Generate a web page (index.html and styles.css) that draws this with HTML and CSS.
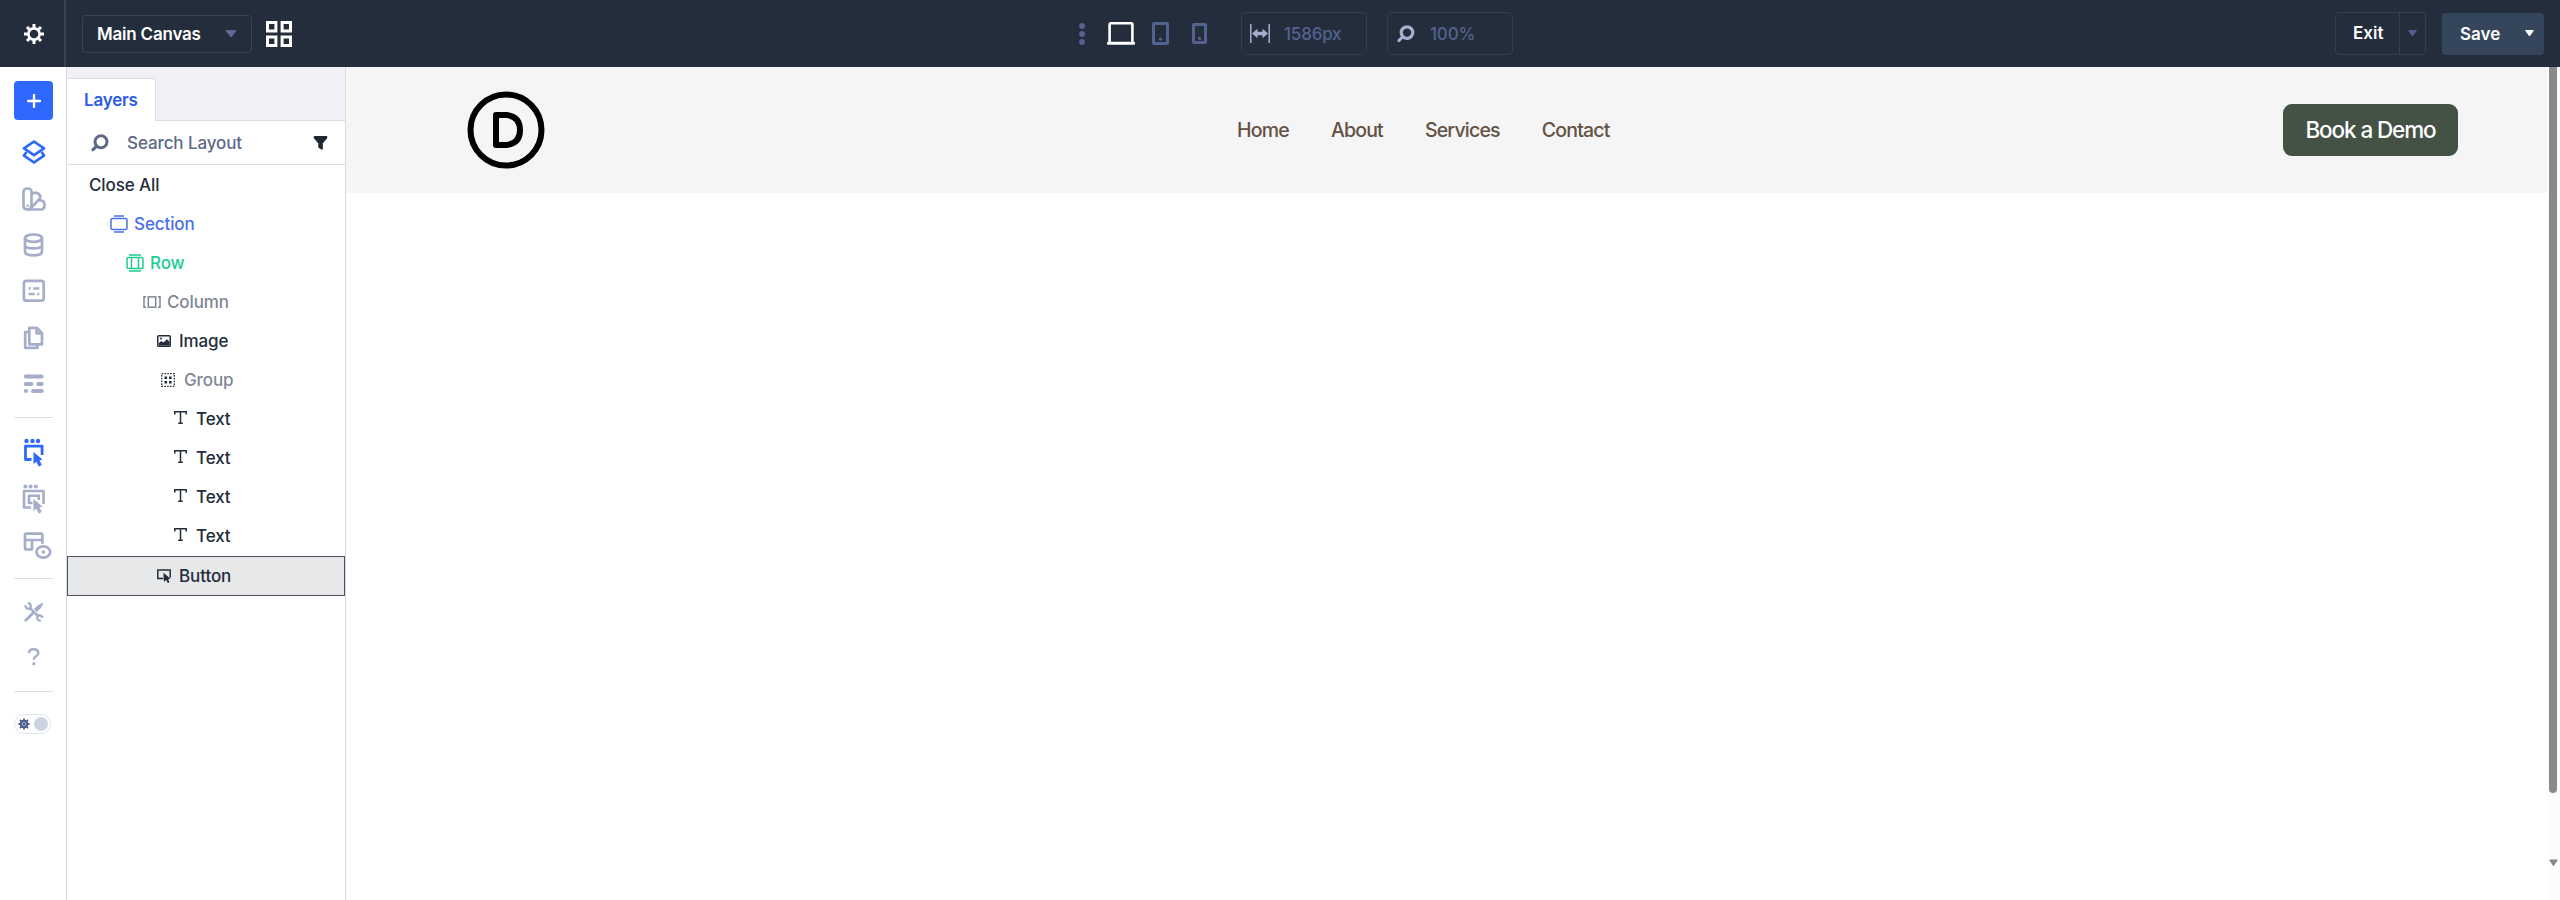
FILE: index.html
```
<!DOCTYPE html>
<html lang="en">
  <head>
    <meta charset="UTF-8" />
    <meta name="viewport" content="width=device-width, initial-scale=1.0" />
    <title>Main Canvas</title>
    <link rel="stylesheet" href="styles.css">
  </head>
  <body>
    <header class="topbar">
      <div class="settings">
        <svg width="20" height="20" viewBox="0 0 20 20"><circle cx="10" cy="10" r="5.6" fill="none" stroke="#fff" stroke-width="2.6" /><path d="M10 0v4M10 16v4M0 10h4M16 10h4M3 3l2.6 2.6M14.4 14.4L17 17M3 17l2.6-2.6M14.4 5.6L17 3" stroke="#fff" stroke-width="3" /></svg>
      </div>
      <div class="canvas-select">
        <span>Main Canvas</span>
        <svg width="12" height="8" viewBox="0 0 12 8"><path d="M1 .7h10L6 7z" fill="#5c6b9a" stroke="#5c6b9a" stroke-linejoin="round" /></svg>
      </div>
      <svg class="grid-icon" width="26" height="26" viewBox="0 0 26 26"><path d="M1.5 1.5h8.4v8.4H1.5zM16.1 1.5h8.4v8.4h-8.4zM1.5 16.1h8.4v8.4H1.5zM16.1 16.1h8.4v8.4h-8.4z" fill="none" stroke="#fff" stroke-width="3" /></svg>
      <div class="devices">
        <svg class="dots" width="6" height="22" viewBox="0 0 6 22"><circle cx="3" cy="3" r="2.9" /><circle cx="3" cy="11" r="2.9" /><circle cx="3" cy="19" r="2.9" /></svg>
        <svg class="laptop" width="28" height="23" viewBox="0 0 28 23"><path d="M2.6 20V2.5Q2.6 1.3 3.8 1.3h20.4q1.2 0 1.2 1.2V20" fill="none" stroke="#fff" stroke-width="2.6" /><rect y="19.8" width="28" height="3" rx="1" fill="#fff" /></svg>
        <svg class="tablet" width="17" height="23" viewBox="0 0 17 23"><rect x="1.5" y="1.5" width="14" height="20" rx=".5" fill="none" stroke="#53638f" stroke-width="3" /><circle cx="8.5" cy="17.2" r="1.6" fill="#53638f" /></svg>
        <svg class="phone" width="15" height="21" viewBox="0 0 15 21"><rect x="1.5" y="1.5" width="12" height="18" rx=".5" fill="none" stroke="#53638f" stroke-width="3" /><circle cx="7.5" cy="15.4" r="1.6" fill="#53638f" /></svg>
      </div>
      <div class="field field-width">
        <svg width="20" height="19" viewBox="0 0 20 19"><path d="M.8 0v19M19.2 0v19" stroke="#a5b0d0" stroke-width="1.5" /><path d="M2 9.5l5.5-4.7v3h5v-3L18 9.5l-5.5 4.7v-3h-5v3z" fill="#a5b0d0" /></svg>
        <span>1586px</span>
      </div>
      <div class="field field-zoom">
        <svg width="18" height="18" viewBox="0 0 18 18"><circle cx="10" cy="7.6" r="5.8" fill="none" stroke="#a5b0d0" stroke-width="3.2" /><path d="M5.4 12L2 15.5" stroke="#a5b0d0" stroke-width="3.2" stroke-linecap="round" /></svg>
        <span>100%</span>
      </div>
      <div class="exit">
        <span class="exit-label">Exit</span>
        <span class="exit-arrow"><svg width="9" height="7" viewBox="0 0 9 7"><path d="M.6.5h7.8L4.5 6z" fill="#535e90" stroke="#535e90" stroke-linejoin="round" /></svg></span>
      </div>
      <div class="save">
        <span>Save</span>
        <svg width="9" height="7" viewBox="0 0 9 7"><path d="M.6.5h7.8L4.5 6z" fill="#fff" stroke="#fff" stroke-linejoin="round" /></svg>
      </div>
    </header>

    <div class="workspace">
      <nav class="rail">
        <button class="add"><svg width="14" height="14" viewBox="0 0 14 14"><path d="M7 1v12M1 7h12" stroke="#fff" stroke-width="2.3" stroke-linecap="round" /></svg></button>
        <div class="rail-item active"><svg width="24" height="24" viewBox="0 0 24 24"><path d="M12 1.5L22 8.3 12 15.2 2 8.3z" /><path d="M4.5 12L2 15.6l10 6.9 10-6.9-2.5-3.6" /></svg></div>
        <div class="rail-item"><svg width="24" height="24" viewBox="0 0 24 24"><path d="M1.5 5.2Q1.5 1.5 5.5 1.5T9.5 5.2V18.7Q9.5 22.5 5.5 22.5T1.5 18.7z" /><path d="M9.5 7.5Q12 4.6 15.5 6.3T18 11.5L8.3 21.6" /><path d="M16.5 13.5h2.3q3.7 0 3.7 4.4T18.8 22.5H5.5" /><circle cx="5.6" cy="18.7" r=".7" stroke-width="1.2" /></svg></div>
        <div class="rail-item"><svg width="24" height="24" viewBox="0 0 24 24"><ellipse cx="11.5" cy="5.2" rx="8.5" ry="3.7" /><path d="M3 5.2v13.4c0 5 17 5 17 0V5.2M3 12c0 4.6 17 4.6 17 0" /></svg></div>
        <div class="rail-item"><svg width="24" height="24" viewBox="0 0 24 24"><rect x="1.9" y="1.9" width="19.8" height="19.8" rx="2.5" /><path d="M6.6 9.5h2M11.3 9.5h6M6.6 15h6M15.3 15h2" /></svg></div>
        <div class="rail-item"><svg width="24" height="24" viewBox="0 0 24 24"><path d="M7.3 1.8h7.7l5 5.4v11.1H7.3zM14.6 2v5.4H20" /><path d="M6.5 6H3.2v15.8h12.3v-3" /></svg></div>
        <div class="rail-item"><svg width="24" height="24" viewBox="0 0 24 24"><path d="M3.8 4.5h15.9M3.8 12h5.7M16.2 12h3.5M3.8 19h.2M11 19h8.7" stroke-width="4" stroke-linecap="round" /></svg></div>
        <hr>
        <div class="rail-item active"><svg width="24" height="30" viewBox="0 0 24 30"><g class="solid"><circle cx="4.5" cy="3" r="2.2" /><circle cx="10.5" cy="3" r="2.2" /><circle cx="16" cy="3" r="2.2" /><path d="M11.5 14l9 7.6-3 .8 2.3 4.6-3.1 1.6-2.3-4.8-2.9 2.3z" /></g><path d="M9.5 21.5h-6V8.1h16.6v9" stroke-width="2.8" /></svg></div>
        <div class="rail-item"><svg width="24" height="30" viewBox="0 0 24 30"><g class="solid"><circle cx="3.4" cy="2.5" r="2" /><circle cx="8.6" cy="2.5" r="2" /><circle cx="13.8" cy="2.5" r="2" /><path d="M11.5 15l9 7.6-3 .8 2.3 4.6-3.1 1.6-2.3-4.8-2.9 2.3z" /></g><path d="M9 23.5H2V7h19.5v13M10.500 19H7v-7.200h9.800V16" stroke-width="2.6" /></svg></div>
        <div class="rail-item layout-view"><svg width="30" height="27" viewBox="0 0 30 27"><path d="M11 17.5H4.400q-1.400 0-1.400-1.400V3q0-1.400 1.400-1.400h14.500q1.400 0 1.400 1.400v8.800M3 8h17.300M10 8v9" /><ellipse cx="21.3" cy="20" rx="6.900" ry="5.600" /><circle class="solid" cx="21.3" cy="20" r="1.8" /></svg></div>
        <hr>
        <div class="rail-item tools"><svg width="20" height="20" viewBox="0 0 20 20"><path d="M1.8 18.2L9.5 10.6" stroke-width="2.8" stroke-linecap="round" /><path d="M11.4 8.5L16 4" stroke-width="4" /><path class="solid" d="M14.2 3.4L18.3.8l1 1-2.6 4.1z" /><path d="M5.6 5.6l9 9" stroke-width="2.6" /><path d="M1.3 3.2Q1.5 6.8 4.8 6.9 7 6 6.8 3.8 6.5 1.2 3.8 1M18.8 15.8Q17.2 12.8 14.6 13.3 12.3 14.8 13.6 17.4 14.6 18.7 16.8 18.8" stroke-width="2.3" /></svg></div>
        <div class="rail-item help"><svg width="14" height="18" viewBox="0 0 14 18"><path d="M2 5.1Q2.2 1.3 6.7 1.3q4.6.1 4.6 3.6 0 1.9-2.2 3.3Q6.8 9.5 6.8 11.7" stroke-width="2.4" /><circle class="solid" cx="6.8" cy="15.7" r="1.6" /></svg></div>
        <hr>
        <div class="toggle">
          <svg width="12" height="12" viewBox="0 0 12 12"><circle cx="6" cy="6" r="4.2" fill="#4c5d8d" /><path d="M6 .5v11M.5 6h11M2 2l8 8M2 10l8-8" stroke="#4c5d8d" stroke-width="1.8" /><circle cx="6" cy="6" r="1.8" fill="#4c5d8d" stroke="#aab4ce" stroke-width="1" /></svg>
          <span class="knob"></span>
        </div>
      </nav>

      <aside class="panel">
        <div class="tabs"><div class="tab">Layers</div></div>
        <div class="search">
          <svg width="18" height="18" viewBox="0 0 18 18"><circle cx="10" cy="7.8" r="6" fill="none" stroke="#5d6987" stroke-width="3" /><path d="M5.4 12.4L2 15.7" stroke="#5d6987" stroke-width="3.2" stroke-linecap="round" /></svg>
          <span>Search Layout</span>
          <svg class="filter" width="15" height="16" viewBox="0 0 15 16"><path d="M1.2 1.5h12.6V3L9.3 8.5v5.8l-3.5-1.8v-4L1.2 3z" fill="#1e2733" stroke="#1e2733" stroke-linejoin="round" /></svg>
        </div>
        <ul class="tree">
          <li class="close-all">Close All</li>
          <li class="section"><svg width="18" height="18" viewBox="0 0 18 18"><rect x="1" y="3.5" width="16" height="11" rx="1.5" /><path d="M4 .9h10M4 17.1h10" /></svg>Section</li>
          <li class="row"><svg width="18" height="18" viewBox="0 0 18 18"><rect x="1" y="3.5" width="16" height="11" rx="1.5" /><path d="M3 .9h12M3 17.1h12M5.5 3.5v11M12.5 3.5v11" /></svg>Row</li>
          <li class="column"><svg width="18" height="12" viewBox="0 0 18 12"><rect x="5.3" y=".8" width="7.4" height="10.4" /><path d="M3 .8H1v10.4h2M15 .8h2v10.4h-2" /></svg>Column</li>
          <li class="image"><svg width="14" height="12" viewBox="0 0 14 12"><rect x=".8" y=".8" width="12.4" height="10.4" rx=".8" /><path class="fill" d="M2 10.5V8l2.4-2 2 1.6L10 4.2l2.5 2.6v3.7z" /><circle class="fill" cx="4" cy="3.6" r="1" /></svg>Image</li>
          <li class="group"><svg width="14" height="14" viewBox="0 0 14 14"><rect x=".7" y=".7" width="12.6" height="12.6" stroke-dasharray="1.6 1.2" stroke-width="1.3" /><path class="fill" d="M3.5 3.5h2.6v2.6H3.5zM8 3.5h2.6v2.6H8zM3.5 8h2.6v2.6H3.5zM8 8h2.6v2.6H8z" /></svg>Group</li>
          <li class="text"><svg width="13" height="13" viewBox="0 0 13 13"><path d="M.8 3.6V.8h11.4v2.8M6.5.8v11.4M4.2 12.2h4.6" /></svg>Text</li>
          <li class="text"><svg width="13" height="13" viewBox="0 0 13 13"><path d="M.8 3.6V.8h11.4v2.8M6.5.8v11.4M4.2 12.2h4.6" /></svg>Text</li>
          <li class="text"><svg width="13" height="13" viewBox="0 0 13 13"><path d="M.8 3.6V.8h11.4v2.8M6.5.8v11.4M4.2 12.2h4.6" /></svg>Text</li>
          <li class="text"><svg width="13" height="13" viewBox="0 0 13 13"><path d="M.8 3.6V.8h11.4v2.8M6.5.8v11.4M4.2 12.2h4.6" /></svg>Text</li>
          <li class="button selected"><svg width="14" height="14" viewBox="0 0 14 14"><path d="M6.5 9.5H.8V.9h12.4v7.5" /><path class="fill" d="M6.4 3.8l7.2 5.9-2.5.5 1.4 3-1.7.8-1.5-3-2.3 1.8z" /></svg>Button</li>
        </ul>
      </aside>

      <main class="canvas">
        <div class="site">
          <div class="site-header">
            <svg class="logo" width="78" height="78" viewBox="0 0 78 78"><circle cx="39" cy="39" r="35.5" fill="none" stroke="#000" stroke-width="6" /><path d="M29 24h10.5Q53 25.5 53 39T39.5 54H29z" fill="none" stroke="#000" stroke-width="6" stroke-linejoin="round" /></svg>
            <nav class="menu">
              <a>Home</a>
              <a>About</a>
              <a>Services</a>
              <a>Contact</a>
            </nav>
            <a class="demo">Book a Demo</a>
          </div>
        </div>
        <div class="scrollbar">
          <div class="thumb"></div>
          <svg width="9" height="8" viewBox="0 0 9 8"><path d="M.7 1h7.600L4.5 6.700z" fill="#888" stroke="#888" stroke-linejoin="round" /></svg>
        </div>
      </main>
    </div>
  </body>
</html>
```
FILE: styles.css
```
* {
  margin: 0;
  padding: 0;
  box-sizing: border-box;
}

body {
  height: 900px;
  background: #fff;
  color: #232d3b;
  font-family: Inter, sans-serif;
  font-size: 17px;
  font-weight: 500;
  overflow: hidden;
}

svg {
  display: block;
  flex: none;
}

.topbar {
  height: 67px;
  background: #232d3b;
  color: #fff;
  display: flex;
  align-items: center;
  padding-right: 16px;
}

.settings {
  width: 66px;
  height: 67px;
  border-right: 2px solid #394252;
  display: flex;
  align-items: center;
  padding-left: 24px;
}

.canvas-select {
  width: 170px;
  height: 38px;
  margin-left: 16px;
  padding: 0 14px;
  border: 1px solid #3a4454;
  border-radius: 4px;
  display: flex;
  align-items: center;
  justify-content: space-between;
  font-weight: 600;
}

.canvas-select span {
  letter-spacing: -0.2px;
}

.grid-icon {
  margin-left: 14px;
}

.devices {
  display: flex;
  align-items: center;
  margin-left: 787px;
}

.dots {
  fill: #53638f;
}

.laptop {
  margin-left: 22px;
}

.tablet {
  margin-left: 17px;
}

.phone {
  margin-left: 23px;
}

.field {
  width: 126px;
  height: 43px;
  border: 1px solid #333e52;
  border-radius: 5px;
  display: flex;
  align-items: center;
  color: #53638f;
  letter-spacing: -0.2px;
}

.field-width {
  margin-left: 34px;
  padding-left: 8px;
  gap: 14px;
}

.field-zoom {
  margin-left: 20px;
  padding-left: 9px;
  gap: 15px;
}

.exit {
  width: 91px;
  height: 43px;
  margin-left: auto;
  border: 1px solid #353f50;
  border-radius: 4px;
  display: flex;
  font-weight: 600;
}

.exit-label {
  width: 64px;
  padding-left: 17px;
  border-right: 1px solid #353f50;
  line-height: 41px;
}

.exit-arrow {
  flex: 1;
  display: flex;
  align-items: center;
  justify-content: center;
}

.save {
  width: 102px;
  height: 42px;
  margin-left: 16px;
  padding: 0 10px 0 18px;
  background: #35455b;
  border-radius: 4px;
  display: flex;
  align-items: center;
  justify-content: space-between;
  font-weight: 600;
}

.workspace {
  height: 833px;
  display: flex;
}

.rail {
  width: 67px;
  border-right: 1px solid #d9dbe4;
  padding-top: 14px;
  display: flex;
  flex-direction: column;
}

.add {
  width: 39px;
  height: 39px;
  margin: 0 0 9px 14px;
  background: #2f68fd;
  border: 0;
  border-radius: 4px;
  display: flex;
  align-items: center;
  justify-content: center;
}

.rail-item {
  height: 46.4px;
  padding-left: 22px;
  display: flex;
  align-items: center;
  fill: none;
  stroke: #a4aec9;
  stroke-width: 2.7;
  stroke-linejoin: round;
}

.rail-item .solid {
  fill: #a4aec9;
  stroke: none;
}

.rail-item.active {
  stroke: #2f68fd;
}

.rail-item.active .solid {
  fill: #2f68fd;
}

.rail hr {
  width: 39px;
  height: 1px;
  margin: 10px 0 11px 14px;
  border: 0;
  background: #dcdee5;
}

.layout-view {
  height: 46px;
}

.tools {
  height: 44px;
  padding-left: 24px;
}

.help {
  padding-left: 27px;
}

.toggle {
  width: 37px;
  height: 20px;
  margin: 11px 0 0 14px;
  border: 1px solid #dfe3ec;
  border-radius: 10px;
  padding: 0 2px 0 3px;
  display: flex;
  align-items: center;
  justify-content: space-between;
}

.knob {
  width: 14px;
  height: 14px;
  border-radius: 50%;
  background: #ccd3e1;
}

.panel {
  width: 279px;
  border-right: 1px solid #d9dbe4;
}

.tabs {
  height: 54px;
  padding-top: 11px;
  background: #f0f1f7;
  border-bottom: 1px solid #dcdee6;
}

.tab {
  width: 89px;
  height: 43px;
  padding-left: 17px;
  background: #fff;
  border: 1px solid #dcdee6;
  border-width: 1px 1px 0 0;
  border-radius: 0 4px 0 0;
  color: #2d5be3;
  font-weight: 600;
  letter-spacing: -0.2px;
  line-height: 43px;
}

.search {
  height: 44px;
  padding: 0 17px 0 24px;
  border-bottom: 1px solid #dcdee6;
  display: flex;
  align-items: center;
  color: #5d6987;
}

.search span {
  margin-left: 18px;
  letter-spacing: -0.1px;
}

.filter {
  margin-left: auto;
}

.tree {
  list-style: none;
  letter-spacing: -0.1px;
}

.tree li {
  height: 39.1px;
  display: flex;
  align-items: center;
  fill: none;
  stroke: currentColor;
  stroke-width: 1.5;
}

.tree .fill {
  fill: currentColor;
  stroke: none;
}

.tree .close-all {
  padding-left: 22px;
}

.tree .section {
  padding-left: 43px;
  gap: 6px;
  color: #4a70e8;
}

.tree .row {
  padding-left: 59px;
  gap: 6px;
  color: #20cc91;
}

.tree .column {
  padding-left: 76px;
  gap: 6px;
  color: #7f8795;
}

.tree .image,
.tree .button {
  padding-left: 90px;
  gap: 8px;
}

.tree .group {
  padding-left: 94px;
  gap: 9px;
  color: #7f8795;
}

.tree .group svg {
  color: #232d3b;
}

.tree .text {
  padding-left: 107px;
  gap: 9px;
}

.tree .text svg {
  margin-bottom: 3px;
}

.tree .selected {
  padding-left: 89px;
  height: 40px;
  background: #e7e8ea;
  border: 1px solid #4b515e;
}

.canvas {
  flex: 1;
  display: flex;
}

.site {
  flex: 1;
}

.site-header {
  height: 126px;
  padding: 0 89px 0 121px;
  background: #f5f5f5;
  display: flex;
  align-items: center;
}

.menu {
  display: flex;
  gap: 42px;
  margin-left: 692px;
  color: #635144;
  font-size: 19.5px;
  letter-spacing: -0.8px;
}

.demo {
  width: 175px;
  height: 52px;
  margin-left: auto;
  background: #435245;
  border-radius: 9px;
  color: #fff;
  font-size: 22.5px;
  letter-spacing: -1.1px;
  line-height: 52px;
  text-align: center;
}

.scrollbar {
  width: 13px;
  background: #fcfcfc;
  display: flex;
  flex-direction: column;
  padding-left: 2px;
}

.thumb {
  width: 8px;
  height: 726px;
  margin-bottom: 66px;
  background: #8a8a8a;
  border-radius: 0 0 4px 4px;
}
```
